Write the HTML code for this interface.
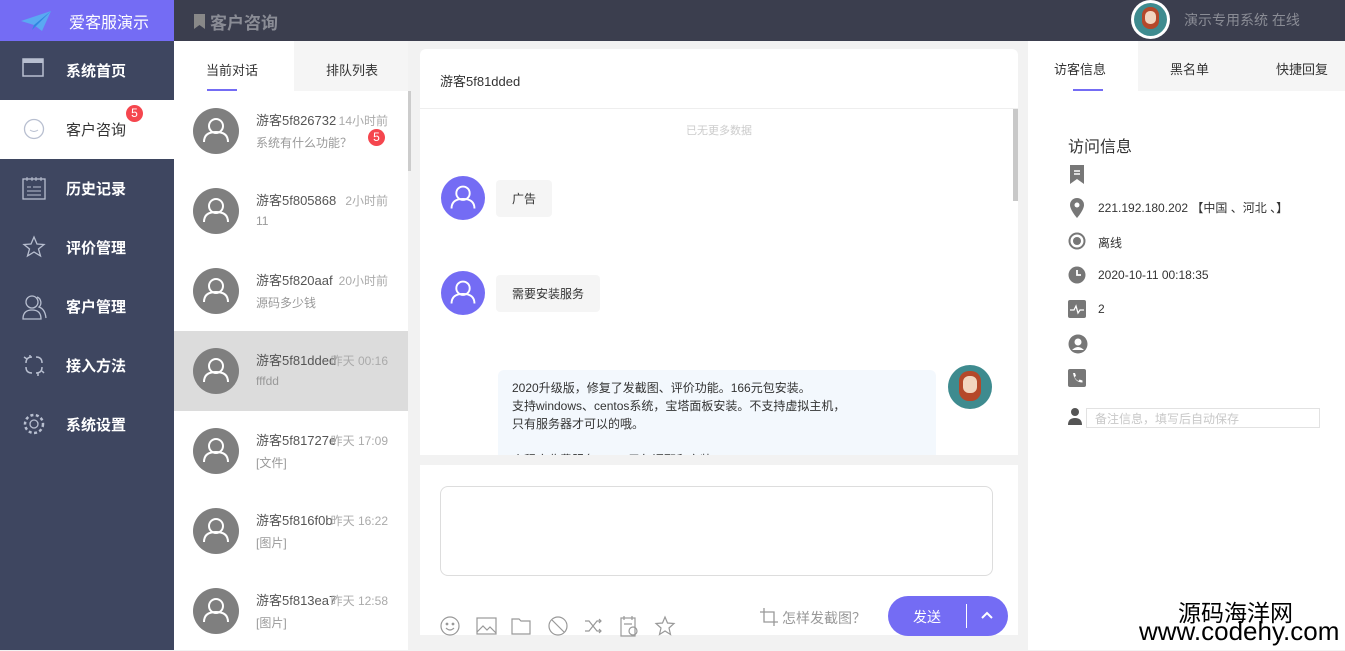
<!DOCTYPE html>
<html><head><meta charset="utf-8"><style>
*{margin:0;padding:0;box-sizing:border-box}
body{width:1345px;height:650px;overflow:hidden;background:#f2f2f2;font-family:"Liberation Sans","Noto Sans CJK SC",sans-serif;position:relative;font-size:13px;color:#333}
.a{position:absolute}
.top{left:0;top:0;width:1345px;height:41px;background:#3b3e4e}
.logo{left:0;top:0;width:174px;height:41px;background:#746cf4;color:#fff;font-size:16px}
.side{left:0;top:41px;width:174px;height:609px;background:#3e4660}
.si{position:absolute;left:0;width:174px;height:59px;color:#fff;font-size:15px;font-weight:bold}
.si span{position:absolute;left:66px;top:19px}
.si svg{position:absolute;left:22px;top:17px}
.list{left:174px;top:41px;width:234px;height:609px;background:#fff}
.it{position:absolute;left:0;width:234px;height:80px}
.av{position:absolute;left:19px;top:17px;width:46px;height:46px;border-radius:50%;background:#7f7f7f}
.av svg,.pv svg{position:absolute;left:0;top:0}
.pv{position:absolute;width:44px;height:44px;border-radius:50%;background:#746cf4}
.nm{position:absolute;left:82px;top:19px;font-size:13px;color:#555;white-space:nowrap}
.tm{position:absolute;right:20px;top:21px;font-size:12px;color:#aaa}
.ms{position:absolute;left:82px;top:43px;font-size:12px;color:#999}
.badge{background:#f5464e;color:#fff;border-radius:50%;width:17px;height:17px;font-size:12px;text-align:center;line-height:17px}
.chat{left:420px;top:49px;width:598px;height:406px;background:#fff;border-radius:6px 6px 0 0;overflow:hidden}
.inp{left:420px;top:465px;width:598px;height:170px;background:#fff}
.right{left:1028px;top:41px;width:317px;height:609px;background:#fff}
.ri{position:absolute;left:40px;font-size:12px;color:#333}
.ri svg{position:absolute;left:0;top:0}
.ri span{position:absolute;left:30px;top:2px;white-space:nowrap}
</style></head><body>
<svg width="0" height="0" style="position:absolute"><defs><symbol id="p" viewBox="0 0 46 46"><circle cx="23" cy="18" r="7" fill="none" stroke="#fff" stroke-width="2"/><path d="M11 34q0-10 12-10t12 10" fill="none" stroke="#fff" stroke-width="2"/></symbol></defs></svg>
<div class="a top"></div>
<div class="a logo">
<svg class="a" style="left:20px;top:10px" width="32" height="22" viewBox="0 0 32 22"><path d="M1 11 L31 1 L22 21 L14 15 Z" fill="#5aa9f2"/><path d="M14 15 L31 1 L12 20 Z" fill="#2f86e0"/></svg>
<span class="a" style="left:69px;top:9px">爱客服演示</span></div>
<svg class="a" style="left:194px;top:14px" width="11" height="15"><path d="M0 0h11v15l-5.5-4-5.5 4z" fill="#888"/></svg>
<div class="a" style="left:210px;top:9px;color:#8a8c95;font-size:17px;font-weight:bold">客户咨询</div>
<div class="a" style="left:1131px;top:0;width:39px;height:39px;border-radius:50%;background:#fff;padding:3px"><div style="width:33px;height:33px;border-radius:50%;background:#3e8b8f;overflow:hidden;position:relative"><div style="position:absolute;left:8px;top:4px;width:17px;height:22px;border-radius:8px;background:#b5482a"></div><div style="position:absolute;left:11px;top:8px;width:11px;height:13px;border-radius:5px;background:#f2d5bf"></div></div></div>
<div class="a" style="left:1184px;top:10px;color:#8a8c95;font-size:14px">演示专用系统 在线</div>

<div class="a side">
<div class="si" style="top:0"><svg width="22" height="20"><rect x="1" y="1" width="20" height="17" fill="none" stroke="#b8bfd0" stroke-width="1.5"/><rect x="1" y="1" width="20" height="4" fill="#b8bfd0"/></svg><span>系统首页</span></div>
<div class="si" style="top:59px;background:#fff;color:#333;font-weight:normal"><svg width="24" height="24"><circle cx="12" cy="12" r="9.5" fill="none" stroke="#b8bfd0" stroke-width="1.3"/><path d="M8 13q4 3 8 0" fill="none" stroke="#b8bfd0"/></svg><span>客户咨询</span><div class="a badge" style="left:126px;top:5px">5</div></div>
<div class="si" style="top:118px"><svg width="24" height="24"><rect x="1" y="3" width="22" height="20" fill="none" stroke="#b8bfd0" stroke-width="1.3"/><path d="M5 1v4M10 1v4M14 1v4M19 1v4M5 11h4M11 11h8M5 15h14M5 19h14" stroke="#b8bfd0"/></svg><span>历史记录</span></div>
<div class="si" style="top:177px"><svg width="24" height="24"><path d="M12 2l3 7 7 .5-5.5 4.5 2 7-6.5-4-6.5 4 2-7-5.5-4.5 7-.5z" fill="none" stroke="#b8bfd0" stroke-width="1.3"/></svg><span>评价管理</span></div>
<div class="si" style="top:236px"><svg width="26" height="26"><circle cx="10" cy="8" r="6" fill="none" stroke="#b8bfd0" stroke-width="1.3"/><path d="M1 25q0-9 9-9t9 9zM15 3a6 6 0 0 1 2 10q6 2 7 11" fill="none" stroke="#b8bfd0" stroke-width="1.3"/></svg><span>客户管理</span></div>
<div class="si" style="top:295px"><svg width="24" height="24"><path d="M4 10q0-6 6-6M14 20q6 0 6-6M2 4l3 2M20 18l2 2M8 2v3M16 20v3M4 14q0 6 6 6M20 10q0-6-6-6" fill="none" stroke="#b8bfd0" stroke-width="1.5"/></svg><span>接入方法</span></div>
<div class="si" style="top:354px"><svg width="24" height="24"><circle cx="12" cy="12" r="4" fill="none" stroke="#b8bfd0" stroke-width="1.3"/><circle cx="12" cy="12" r="9" fill="none" stroke="#b8bfd0" stroke-width="2.5" stroke-dasharray="3 2.5"/></svg><span>系统设置</span></div>
</div>

<div class="a list">
<div class="a" style="left:0;top:0;width:120px;height:50px;background:#fff;border-radius:6px 6px 0 0"></div>
<div class="a" style="left:120px;top:0;width:114px;height:50px;background:#f5f5f5"></div>
<div class="a" style="left:32px;top:19px;font-size:13px;color:#333">当前对话</div>
<div class="a" style="left:33px;top:48px;width:30px;height:2px;background:#746cf4"></div>
<div class="a" style="left:152px;top:19px;font-size:13px;color:#333">排队列表</div>
<div class="it" style="top:50px"><div class="av"><svg width="46" height="46"><use href="#p"/></svg></div><div class="nm">游客5f826732</div><div class="tm">14小时前</div><div class="ms">系统有什么功能？</div><div class="a badge" style="left:194px;top:38px">5</div></div>
<div class="it" style="top:130px"><div class="av"><svg width="46" height="46"><use href="#p"/></svg></div><div class="nm">游客5f805868</div><div class="tm">2小时前</div><div class="ms">11</div></div>
<div class="it" style="top:210px"><div class="av"><svg width="46" height="46"><use href="#p"/></svg></div><div class="nm">游客5f820aaf</div><div class="tm">20小时前</div><div class="ms">源码多少钱</div></div>
<div class="it" style="top:290px;background:#dcdcdc"><div class="av"><svg width="46" height="46"><use href="#p"/></svg></div><div class="nm">游客5f81dded</div><div class="tm">昨天 00:16</div><div class="ms">fffdd</div></div>
<div class="it" style="top:370px"><div class="av"><svg width="46" height="46"><use href="#p"/></svg></div><div class="nm">游客5f81727e</div><div class="tm">昨天 17:09</div><div class="ms">[文件]</div></div>
<div class="it" style="top:450px"><div class="av"><svg width="46" height="46"><use href="#p"/></svg></div><div class="nm">游客5f816f0b</div><div class="tm">昨天 16:22</div><div class="ms">[图片]</div></div>
<div class="it" style="top:530px"><div class="av"><svg width="46" height="46"><use href="#p"/></svg></div><div class="nm">游客5f813ea7</div><div class="tm">昨天 12:58</div><div class="ms">[图片]</div></div>
</div>
<div class="a" style="left:408px;top:91px;width:3px;height:80px;background:#ccc"></div>

<div class="a chat">
<div class="a" style="left:20px;top:22px;font-size:13px;color:#333">游客5f81dded</div>
<div class="a" style="left:0;top:59px;width:598px;height:1px;background:#eee"></div>
<div class="a" style="left:266px;top:73px;font-size:11px;color:#ccc">已无更多数据</div>
<div class="pv" style="left:21px;top:127px"><svg width="44" height="44" viewBox="0 0 46 46"><use href="#p"/></svg></div>
<div class="a" style="left:76px;top:131px;padding:10px 16px;background:#f5f5f5;border-radius:4px;font-size:12px">广告</div>
<div class="pv" style="left:21px;top:222px"><svg width="44" height="44" viewBox="0 0 46 46"><use href="#p"/></svg></div>
<div class="a" style="left:76px;top:226px;padding:10px 16px;background:#f5f5f5;border-radius:4px;font-size:12px">需要安装服务</div>
<div class="a" style="left:78px;top:321px;width:438px;height:100px;background:#f3f8fd;border-radius:6px;padding:9px 14px;font-size:12px;line-height:18px;color:#333">2020升级版，修复了发截图、评价功能。166元包安装。<br>支持windows、centos系统，宝塔面板安装。不支持虚拟主机，<br>只有服务器才可以的哦。<br><br>小程序收费服务，100元包调配和安装</div>
<div class="a" style="left:528px;top:316px;width:44px;height:44px;border-radius:50%;background:#3e8b8f;overflow:hidden"><div class="a" style="left:11px;top:6px;width:22px;height:30px;border-radius:10px;background:#b5482a"></div><div class="a" style="left:15px;top:11px;width:14px;height:17px;border-radius:6px;background:#f2d5bf"></div></div>
<div class="a" style="left:593px;top:60px;width:5px;height:92px;background:#c8c8c8"></div>
</div>

<div class="a inp">
<div class="a" style="left:20px;top:21px;width:553px;height:90px;border:1px solid #ddd;border-radius:8px"></div>
<svg class="a" style="left:20px;top:150px" width="240" height="22" fill="none" stroke="#999" stroke-width="1.2">
<circle cx="10" cy="11" r="9"/><circle cx="7" cy="9" r=".8" fill="#999"/><circle cx="13" cy="9" r=".8" fill="#999"/><path d="M6 13q4 4 8 0"/>
<rect x="37" y="3" width="19" height="16"/><path d="M37 17l6-6 4 4 3-3 6 6"/>
<path d="M72 4h7l2 2h9v13h-18z"/>
<circle cx="118" cy="11" r="9"/><path d="M112 5l12 12"/>
<path d="M145 6h4l8 10h4M145 16h4l8-10h4M159 4l2 2-2 2M159 14l2 2-2 2"/>
<rect x="181" y="3" width="14" height="18"/><path d="M184 1v4M192 1v4M184 9h8"/><circle cx="193" cy="16" r="4"/>
<path d="M225 2l2.5 6 6.5.5-5 4.5 1.5 6.5-5.5-3.5-5.5 3.5 1.5-6.5-5-4.5 6.5-.5z"/></svg>
<svg class="a" style="left:340px;top:143px" width="18" height="18" fill="none" stroke="#999" stroke-width="1.3"><path d="M4 0v14h14M0 4h14v14"/></svg>
<div class="a" style="left:362px;top:143px;font-size:14px;color:#999">怎样发截图？</div>
<div class="a" style="left:468px;top:131px;width:120px;height:40px;border-radius:20px;background:#746cf4;color:#fff;font-size:14px"><span class="a" style="left:25px;top:11px">发送</span><div class="a" style="left:78px;top:8px;width:1px;height:24px;background:#fff"></div><svg class="a" style="left:93px;top:15px" width="12" height="9"><path d="M1 7l5-5 5 5" fill="none" stroke="#fff" stroke-width="2"/></svg></div>
</div>

<div class="a right">
<div class="a" style="left:0;top:0;width:110px;height:50px;background:#fff"></div>
<div class="a" style="left:110px;top:0;width:207px;height:50px;background:#f5f5f5"></div>
<div class="a" style="left:26px;top:18px;font-size:13px">访客信息</div>
<div class="a" style="left:45px;top:48px;width:30px;height:2px;background:#746cf4"></div>
<div class="a" style="left:142px;top:18px;font-size:13px">黑名单</div>
<div class="a" style="left:248px;top:18px;font-size:13px">快捷回复</div>
<div class="a" style="left:40px;top:92px;font-size:16px;color:#333">访问信息</div>
<div class="ri" style="top:123px"><svg width="18" height="20"><path d="M2 1h14v19l-7-5-7 5z" fill="#777"/><path d="M6 7h6M6 10h6" stroke="#fff" stroke-width="1.4"/></svg></div>
<div class="ri" style="top:156px"><svg width="18" height="22"><path d="M9 1a7 7 0 0 1 7 7c0 5-7 13-7 13S2 13 2 8a7 7 0 0 1 7-7z" fill="#777"/><circle cx="9" cy="8" r="2.5" fill="#fff"/></svg><span>221.192.180.202 【中国 、河北 、】</span></div>
<div class="ri" style="top:191px"><svg width="18" height="18"><circle cx="9" cy="9" r="7.5" fill="none" stroke="#777" stroke-width="2"/><circle cx="9" cy="9" r="4" fill="#777"/></svg><span>离线</span></div>
<div class="ri" style="top:225px"><svg width="18" height="18"><circle cx="9" cy="9" r="8.5" fill="#777"/><path d="M9 4v5h4" stroke="#fff" stroke-width="1.8" fill="none"/></svg><span>2020-10-11 00:18:35</span></div>
<div class="ri" style="top:259px"><svg width="18" height="18"><rect x="0" y="0" width="18" height="18" rx="2" fill="#777"/><path d="M2 10h4l2-4 2 7 2-3h4" stroke="#fff" stroke-width="1.3" fill="none"/></svg><span>2</span></div>
<div class="ri" style="top:293px"><svg width="20" height="20"><circle cx="10" cy="10" r="9.5" fill="#777"/><circle cx="10" cy="8" r="3.5" fill="#fff"/><path d="M4 16q6-6 12 0" fill="#fff"/></svg></div>
<div class="ri" style="top:328px"><svg width="18" height="18"><rect width="18" height="18" rx="2" fill="#777"/><path d="M5 4l2 0 1 3-1.5 1q1.5 3 4 4l1-1.5 3 1v2q-8 0-9.5-9.5z" fill="#fff"/></svg></div>
<div class="ri" style="top:366px"><svg width="16" height="18"><circle cx="7" cy="5" r="4" fill="#555"/><path d="M0 18q0-7 7-7t7 7z" fill="#555"/></svg></div>
<div class="a" style="left:58px;top:367px;width:234px;height:20px;border:1px solid #e2e2e2;font-size:12px;color:#c8c8c8;padding:1px 8px">备注信息，填写后自动保存</div>
</div>

<div class="a" style="left:1130px;top:594px;width:215px;height:56px;background:#fff"></div>
<div class="a" style="left:1178px;top:594px;font-size:23px;color:#000">源码海洋网</div>
<div class="a" style="left:1139px;top:616px;font-size:26px;color:#000">www.codehy.com</div>
</body></html>
